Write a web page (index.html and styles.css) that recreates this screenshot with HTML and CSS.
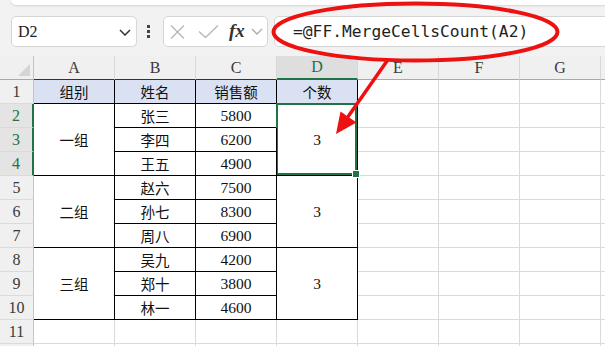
FILE: index.html
```html
<!DOCTYPE html>
<html lang="zh">
<head>
<meta charset="utf-8">
<link rel="stylesheet" href="styles.css">
</head>
<body>
<div class="app">
  <div class="top">
    <div class="ribbon-edge"></div>
    <div class="fbar">
      <div class="namebox">
        <span class="ref">D2</span>
        <svg class="chev" width="12" height="7" viewBox="0 0 12 7"><path d="M1 1 L6 6 L11 1" fill="none" stroke="#333" stroke-width="1.5"/></svg>
      </div>
      <div class="dots"><i></i><i></i><i></i></div>
      <div class="fxbox">
        <svg width="16" height="14" viewBox="0 0 16 14"><path d="M1 0.5 L14 13.5 M14 0.5 L1 13.5" stroke="#b8b8b8" stroke-width="1.4" fill="none"/></svg>
        <svg width="21" height="13" viewBox="0 0 21 13"><path d="M1 6.5 L7.5 12.5 L20 0.5" stroke="#b8b8b8" stroke-width="1.4" fill="none"/></svg>
        <span class="fx">fx</span>
        <svg width="12" height="7" viewBox="0 0 12 7"><path d="M1 1 L6 6 L11 1" fill="none" stroke="#aaa" stroke-width="1.3"/></svg>
      </div>
      <div class="formula">=@FF.MergeCellsCount(A2)</div>
    </div>
  </div>

  <div class="sheet">
    <div class="ch corner"><svg width="12" height="12" viewBox="0 0 12 12"><path d="M12 0 L12 12 L0 12 Z" fill="#d4d4d4"/></svg></div>
    <div class="ch dk">A</div><div class="ch dk">B</div><div class="ch dk">C</div><div class="ch dk cur">D</div><div class="ch">E</div><div class="ch">F</div><div class="ch">G</div><div class="ch last"></div>

    <div class="rh">1</div>
    <div class="c t hd">组别</div><div class="c t hd">姓名</div><div class="c t hd">销售额</div><div class="c t hd">个数</div><div class="c"></div><div class="c"></div><div class="c"></div><div class="c last"></div>

    <div class="rh sr">2</div>
    <div class="c t m3">一组</div><div class="c t">张三</div><div class="c t n">5800</div><div class="c t n m3 sel">3</div><div class="c"></div><div class="c"></div><div class="c"></div><div class="c last"></div>

    <div class="rh sr">3</div>
    <div class="c t">李四</div><div class="c t n">6200</div><div class="c"></div><div class="c"></div><div class="c"></div><div class="c last"></div>

    <div class="rh sr">4</div>
    <div class="c t">王五</div><div class="c t n">4900</div><div class="c"></div><div class="c"></div><div class="c"></div><div class="c last"></div>

    <div class="rh">5</div>
    <div class="c t m3">二组</div><div class="c t">赵六</div><div class="c t n">7500</div><div class="c t n m3">3</div><div class="c"></div><div class="c"></div><div class="c"></div><div class="c last"></div>

    <div class="rh">6</div>
    <div class="c t">孙七</div><div class="c t n">8300</div><div class="c"></div><div class="c"></div><div class="c"></div><div class="c last"></div>

    <div class="rh">7</div>
    <div class="c t">周八</div><div class="c t n">6900</div><div class="c"></div><div class="c"></div><div class="c"></div><div class="c last"></div>

    <div class="rh">8</div>
    <div class="c t m3">三组</div><div class="c t">吴九</div><div class="c t n">4200</div><div class="c t n m3">3</div><div class="c"></div><div class="c"></div><div class="c"></div><div class="c last"></div>

    <div class="rh">9</div>
    <div class="c t">郑十</div><div class="c t n">3800</div><div class="c"></div><div class="c"></div><div class="c"></div><div class="c last"></div>

    <div class="rh">10</div>
    <div class="c t">林一</div><div class="c t n">4600</div><div class="c"></div><div class="c"></div><div class="c"></div><div class="c last"></div>

    <div class="rh">11</div>
    <div class="c"></div><div class="c"></div><div class="c"></div><div class="c"></div><div class="c"></div><div class="c"></div><div class="c"></div><div class="c last"></div>

    <div class="rh"></div>
    <div class="c"></div><div class="c"></div><div class="c"></div><div class="c"></div><div class="c"></div><div class="c"></div><div class="c"></div><div class="c last"></div>
  </div>

  <svg class="annot" width="605" height="346" viewBox="0 0 605 346">
    <ellipse cx="415.5" cy="32" rx="142" ry="28.5" fill="none" stroke="#ee1111" stroke-width="4"/>
    <line x1="387" y1="61" x2="348.5" y2="116" stroke="#ee1111" stroke-width="3.5" stroke-linecap="round"/>
    <polygon points="336,134 340.5,111.5 356.5,122.5" fill="#ee1111"/>
  </svg>
</div>
</body>
</html>
```

FILE: styles.css
```css
* { box-sizing: border-box; }
html, body { margin: 0; padding: 0; }
body { width: 605px; height: 346px; overflow: hidden; background: #fff; }

.app { position: relative; width: 605px; height: 346px; overflow: hidden; }

.top {
  height: 56px;
  background: #f2f2f2;
  display: flex;
  flex-direction: column;
}
.ribbon-edge {
  height: 5px;
  margin: 0 -8px 0 11px;
  background: #fff;
  border-radius: 0 0 6px 6px;
  box-shadow: 0 1px 2px rgba(0,0,0,0.12);
}
.fbar {
  margin-top: 11px;
  height: 31px;
  display: flex;
  align-items: stretch;
  padding-left: 11px;
}
.namebox {
  width: 126px;
  background: #fff;
  border: 1px solid #d6d6d6;
  border-radius: 5px;
  display: flex;
  align-items: center;
  justify-content: space-between;
  padding: 0 5px 0 6px;
}
.ref {
  font-family: "Liberation Serif", serif;
  font-size: 16px;
  color: #222;
}
.chev { margin-top: 1px; }
.dots {
  width: 26px;
  display: flex;
  flex-direction: column;
  justify-content: center;
  align-items: flex-start;
  gap: 2px;
  padding-left: 10px;
}
.dots i {
  display: block;
  width: 3px;
  height: 3px;
  background: #444;
}
.fxbox {
  width: 105px;
  background: #fff;
  border: 1px solid #d6d6d6;
  border-radius: 5px;
  display: flex;
  align-items: center;
  padding-left: 6px;
  gap: 0;
}
.fxbox svg:nth-child(1) { margin-right: 12px; }
.fxbox svg:nth-child(2) { margin-right: 10px; }
.fx {
  font-family: "Liberation Serif", serif;
  font-style: italic;
  font-weight: bold;
  font-size: 19px;
  color: #333;
  margin-right: 6px;
  margin-top: -2px;
}
.formula {
  flex: 1;
  margin-left: 6px;
  margin-right: -10px;
  background: #fff;
  border: 1px solid #d6d6d6;
  border-radius: 5px 0 0 5px;
  font-family: "DejaVu Sans Mono", monospace;
  font-size: 16.3px;
  color: #1e1e1e;
  display: flex;
  align-items: center;
  padding-left: 18px;
}

.sheet {
  display: grid;
  grid-template-columns: 34px repeat(7, 81px) 1fr;
  grid-template-rows: repeat(13, 24px);
  background: #fff;
}
.ch {
  background: #f0f0f0;
  border-right: 1px solid #d8d8d8;
  border-bottom: 1px solid #a8a8a8;
  font-family: "Liberation Serif", serif;
  font-size: 16px;
  color: #3a3a3a;
  display: flex;
  align-items: center;
  justify-content: center;
}
.ch.dk { border-bottom-color: #333; }
.ch.cur {
  background: #dedede;
  color: #217346;
  border-bottom: 2px solid #217346;
}
.ch.last { border-right: none; }
.corner {
  justify-content: flex-end;
  align-items: flex-end;
  padding: 0 3px 3px 0;
  border-right-color: #c4c4c4;
}
.rh {
  background: #f0f0f0;
  border-right: 1px solid #c4c4c4;
  border-bottom: 1px solid #dadada;
  font-family: "Liberation Serif", serif;
  font-size: 16px;
  color: #3a3a3a;
  display: flex;
  align-items: center;
  justify-content: center;
}
.rh.sr {
  background: #e4e4e4;
  color: #217346;
  border-right: 2px solid #217346;
}
.c {
  border-right: 1px solid #dadada;
  border-bottom: 1px solid #dadada;
  display: flex;
  align-items: center;
  justify-content: center;
  font-family: "Noto Sans CJK SC", sans-serif;
  font-size: 14.5px;
  color: #111;
  position: relative;
}
.c.last { border-right: none; }
.c.t {
  border-right-color: #000;
  border-bottom-color: #000;
}
.c.hd { background: #d9e1f2; }
.c.n {
  font-family: "Liberation Serif", serif;
  font-size: 15.5px;
}
.m3 { grid-row: span 3; }
.sel::after {
  content: "";
  position: absolute;
  top: -1px;
  left: -1px;
  right: 0;
  bottom: 0;
  border: 2px solid #217346;
}
.sel::before {
  content: "";
  position: absolute;
  right: -3px;
  bottom: -3px;
  width: 6px;
  height: 6px;
  background: #217346;
  border: 1px solid #fff;
  z-index: 2;
}

.annot {
  position: absolute;
  top: 0;
  left: 0;
  pointer-events: none;
}
```
